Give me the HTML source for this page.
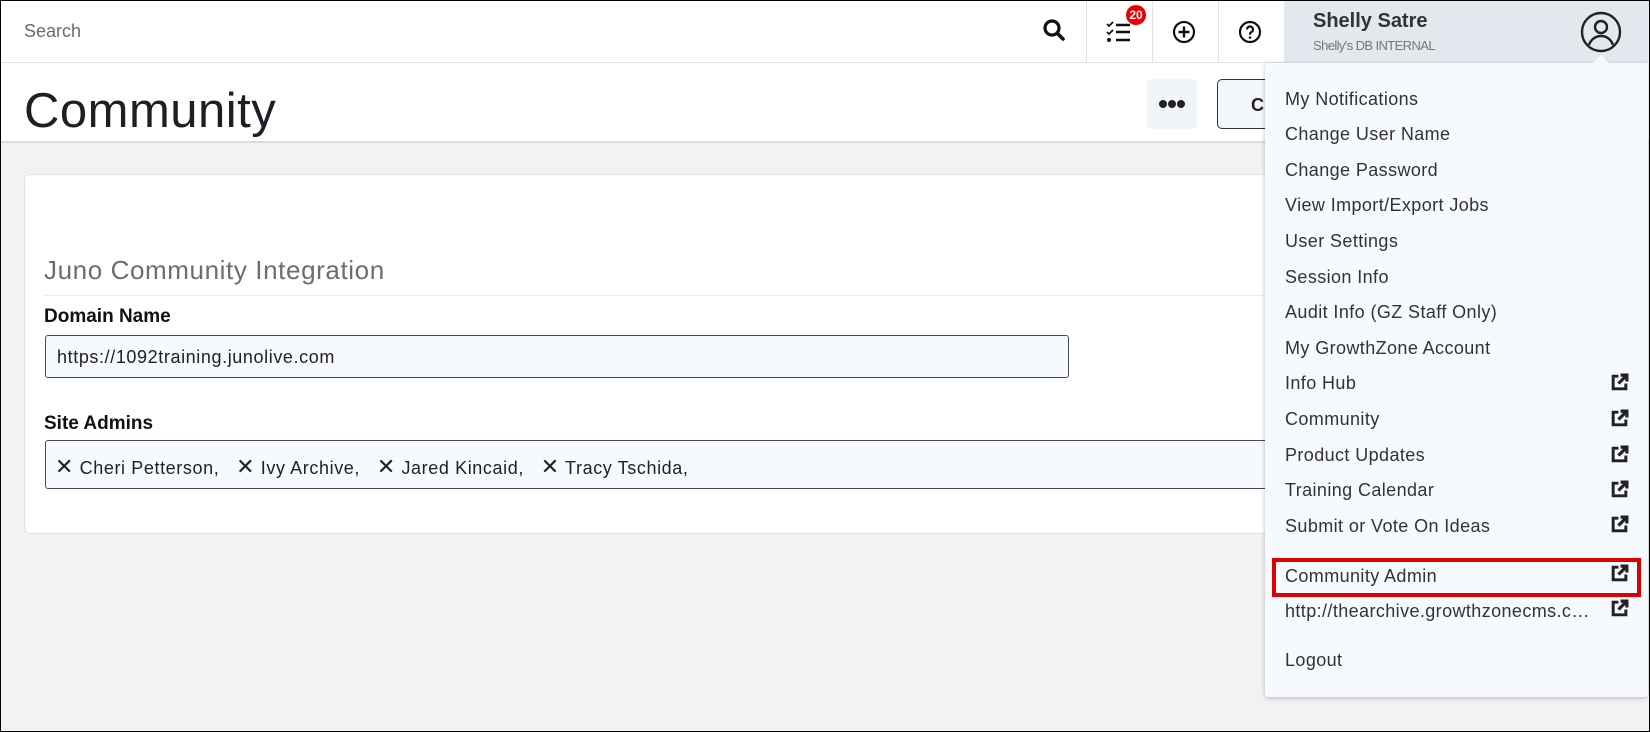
<!DOCTYPE html>
<html><head><meta charset="utf-8"><style>
*{box-sizing:border-box;margin:0;padding:0}
body{width:1650px;height:732px;position:relative;overflow:hidden;background:#f2f2f2;font-family:"Liberation Sans",sans-serif;color:#222}
.frame{position:absolute;left:0;top:0;width:1650px;height:732px;border:1px solid #000;pointer-events:none;z-index:50}
.top{position:absolute;left:0;top:0;width:1650px;height:63px;background:#fff;border-bottom:1px solid #e4e4e4}
.search{position:absolute;left:24px;top:21px;font-size:18px;color:#6b6b6b}
.div{position:absolute;top:0;width:1px;height:63px;background:#e2e2e2}
.user{position:absolute;left:1284px;top:0;width:366px;height:63px;background:#e3e8ef}
.hdr{position:absolute;left:0;top:63px;width:1650px;height:80px;background:#fff;border-bottom:2px solid #dcdcdc}
.title{position:absolute;left:24px;top:20px;font-size:49px;color:#1e1e24;letter-spacing:0.5px}
.card{position:absolute;left:24px;top:174px;width:1400px;height:360px;background:#fff;border:1px solid #e2e2e2;border-radius:6px}
.sec{position:absolute;left:19px;top:80px;font-size:26px;color:#6d6d6d;letter-spacing:0.6px}
.hr{position:absolute;left:19px;top:120px;width:1380px;height:1px;background:#ececec}
.lbl{position:absolute;left:19px;font-size:19px;font-weight:bold;color:#111}
.inp{position:absolute;left:20px;background:#f6f9fd;border:1px solid #4a4a55;border-radius:3px;font-size:18px;color:#222;letter-spacing:0.6px;white-space:nowrap}
.dd{position:absolute;left:1265px;top:63px;width:383px;height:634px;background:#f6f9fd;box-shadow:0 1px 5px rgba(0,0,0,.25);border-radius:3px;z-index:10}
.it{position:absolute;left:20px;font-size:18px;color:#333;letter-spacing:0.4px;white-space:nowrap}
.ext{position:absolute;left:345px;width:19px;height:19px}
.red{position:absolute;left:7px;top:495px;width:369px;height:39px;border:4px solid #e00000}
</style></head><body>
<div class="top">
 <div class="search">Search</div>
 <svg style="position:absolute;left:1042px;top:18px" width="24" height="24" viewBox="0 0 24 24"><circle cx="10" cy="10" r="7" fill="none" stroke="#111" stroke-width="3.2"/><path d="M15 15l6 6" stroke="#111" stroke-width="3.6" stroke-linecap="round"/></svg>
 <div class="div" style="left:1086px"></div>
 <svg style="position:absolute;left:1105px;top:20px" width="28" height="24" viewBox="0 0 28 24"><path d="M2 4l2 2 4-4M2 12l2 2 4-4" stroke="#111" stroke-width="1.8" fill="none"/><circle cx="4" cy="20" r="2" fill="#111"/><path d="M11 5h14M11 12h14M11 20h14" stroke="#111" stroke-width="2.6"/></svg>
 <div style="position:absolute;left:1126px;top:5px;width:20px;height:20px;border-radius:50%;background:#e00;color:#fff;font-size:12px;font-weight:bold;text-align:center;line-height:20px">20</div>
 <div class="div" style="left:1152px"></div>
 <svg style="position:absolute;left:1172px;top:20px" width="24" height="24" viewBox="0 0 24 24"><circle cx="12" cy="12" r="10" fill="none" stroke="#111" stroke-width="2.2"/><path d="M12 6.5v11M6.5 12h11" stroke="#111" stroke-width="2.4"/></svg>
 <div class="div" style="left:1218px"></div>
 <svg style="position:absolute;left:1238px;top:20px" width="24" height="24" viewBox="0 0 24 24"><circle cx="12" cy="12" r="10" fill="none" stroke="#111" stroke-width="2.2"/><path d="M9 9.5a3 3 0 1 1 4 2.8c-1 .5-1 1.2-1 2.5" stroke="#111" stroke-width="2.2" fill="none"/><circle cx="12" cy="17.5" r="1.3" fill="#111"/></svg>
 <div class="user">
  <div style="position:absolute;left:29px;top:10px;font-size:20px;font-weight:bold;color:#333">Shelly Satre</div>
  <div style="position:absolute;left:29px;top:38px;font-size:13px;color:#777;letter-spacing:-0.6px">Shelly's DB INTERNAL</div>
  <svg style="position:absolute;left:296px;top:11px" width="42" height="42" viewBox="0 0 42 42"><circle cx="21" cy="21" r="19" fill="none" stroke="#222" stroke-width="2.4"/><circle cx="21" cy="16" r="6" fill="none" stroke="#222" stroke-width="2.4"/><path d="M9 34c2-6 7-9 12-9s10 3 12 9" fill="none" stroke="#222" stroke-width="2.4"/></svg>
 </div>
</div>
<div class="hdr">
 <div class="title">Community</div>
 <div style="position:absolute;left:1147px;top:16px;width:50px;height:50px;background:#f1f4f8;border-radius:5px">
  <svg width="50" height="50" viewBox="0 0 50 50"><circle cx="16" cy="25" r="4" fill="#222"/><circle cx="25" cy="25" r="4" fill="#222"/><circle cx="34" cy="25" r="4" fill="#222"/></svg>
 </div>
 <div style="position:absolute;left:1217px;top:16px;width:120px;height:50px;background:#f3f6fa;border:1px solid #333;border-radius:5px;font-size:18px;font-weight:bold;padding:15px 0 0 33px">CU</div>
</div>
<div class="card">
 <div class="sec">Juno Community Integration</div>
 <div class="hr"></div>
 <div class="lbl" style="top:131px">Domain Name</div>
 <div class="inp" style="top:160px;width:1024px;height:43px;padding:11px 0 0 11px">https://1092training.junolive.com</div>
 <div class="lbl" style="top:238px">Site Admins</div>
 <div class="inp" style="top:265px;width:1380px;height:49px;padding:13px 0 0 9px">
  <span style="font-size:22px">✕</span> Cheri Petterson,&nbsp;&nbsp; <span style="font-size:22px">✕</span> Ivy Archive,&nbsp;&nbsp; <span style="font-size:22px">✕</span> Jared Kincaid,&nbsp;&nbsp; <span style="font-size:22px">✕</span> Tracy Tschida,
 </div>
</div>
<div style="position:absolute;left:1593px;top:55px;width:0;height:0;border-left:8px solid transparent;border-right:8px solid transparent;border-bottom:8px solid #f6f9fd;z-index:11"></div>
<div class="dd">
 <div class="it" style="top:26px">My Notifications</div>
 <div class="it" style="top:61px">Change User Name</div>
 <div class="it" style="top:97px">Change Password</div>
 <div class="it" style="top:132px">View Import/Export Jobs</div>
 <div class="it" style="top:168px">User Settings</div>
 <div class="it" style="top:204px">Session Info</div>
 <div class="it" style="top:239px">Audit Info (GZ Staff Only)</div>
 <div class="it" style="top:275px">My GrowthZone Account</div>
 <div class="it" style="top:310px">Info Hub</div>
 <div class="it" style="top:346px">Community</div>
 <div class="it" style="top:382px">Product Updates</div>
 <div class="it" style="top:417px">Training Calendar</div>
 <div class="it" style="top:453px">Submit or Vote On Ideas</div>
 <div class="red"></div>
 <div class="it" style="top:503px">Community Admin</div>
 <div class="it" style="top:538px">http://thearchive.growthzonecms.c…</div>
 <div class="it" style="top:587px">Logout</div>
 <svg width="0" height="0" style="position:absolute"><defs><g id="e"><path d="M8 3H3v12h12v-5" fill="none" stroke="#222" stroke-width="2.8"/><path d="M10 2h6v6M16 2L8 10" fill="none" stroke="#222" stroke-width="3"/></g></defs></svg>
 <svg class="ext" style="top:310px" viewBox="0 0 18 18"><use href="#e"/></svg>
 <svg class="ext" style="top:346px" viewBox="0 0 18 18"><use href="#e"/></svg>
 <svg class="ext" style="top:382px" viewBox="0 0 18 18"><use href="#e"/></svg>
 <svg class="ext" style="top:417px" viewBox="0 0 18 18"><use href="#e"/></svg>
 <svg class="ext" style="top:452px" viewBox="0 0 18 18"><use href="#e"/></svg>
 <svg class="ext" style="top:501px" viewBox="0 0 18 18"><use href="#e"/></svg>
 <svg class="ext" style="top:536px" viewBox="0 0 18 18"><use href="#e"/></svg>
</div>
<div class="frame"></div>
</body></html>
